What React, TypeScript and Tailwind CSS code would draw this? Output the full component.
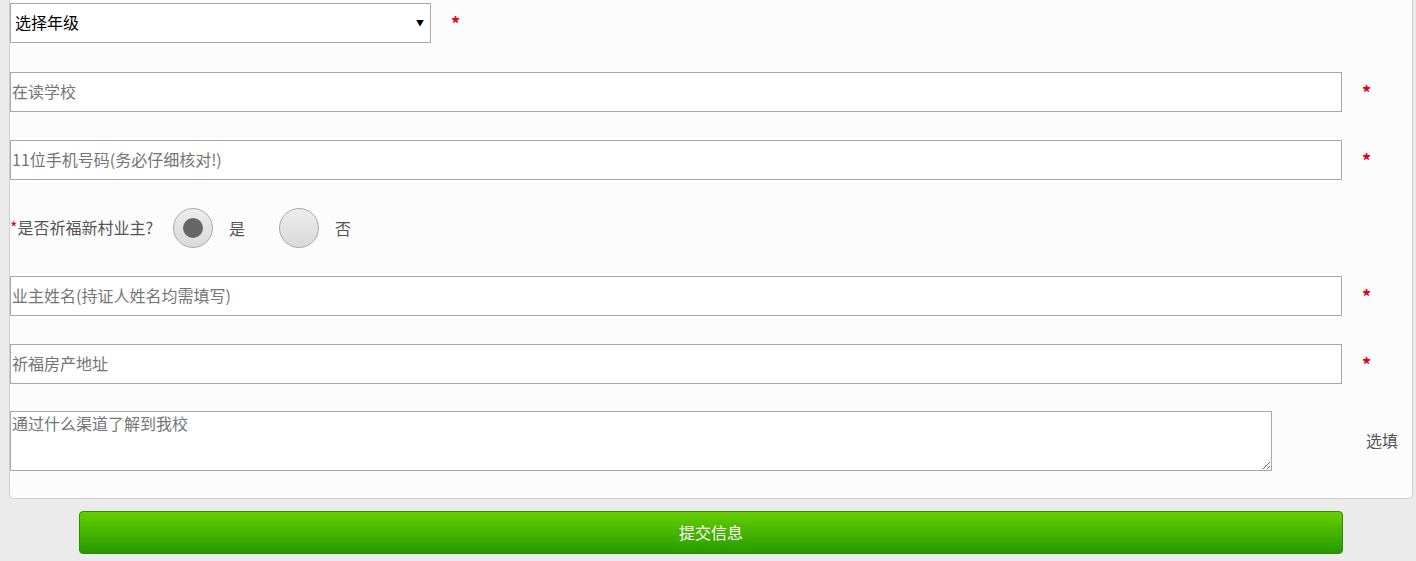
import React from 'react';

const font = { fontFamily: '"Noto Sans CJK SC", "Liberation Sans", sans-serif' };

const Star: React.FC<{ className?: string }> = ({ className = '' }) => (
    <span className={`text-[#e60012] text-[18px] font-bold leading-none ${className}`}>*</span>
);

const TextRow: React.FC<{ placeholder: string; className?: string }> = ({ placeholder, className = '' }) => (
    <div className={`flex items-center ${className}`}>
        <input
            type="text"
            placeholder={placeholder}
            className="w-[1332px] h-[40px] bg-white border border-[#a9a9a9] px-[1px] pb-[2px] text-[16px] text-[#333] placeholder-[#757575] outline-none"
        />
        <Star className="ml-[20px]" />
    </div>
);

const Radio: React.FC<{ checked?: boolean; label: string }> = ({ checked, label }) => (
    <label className="flex items-center">
        <span className="w-[40px] h-[40px] rounded-full border border-[#aaaaaa] bg-gradient-to-b from-[#ededed] to-[#d9d9d9] flex items-center justify-center">
            {checked && <span className="w-[20px] h-[20px] rounded-full bg-[#666666]" />}
        </span>
        <span className="ml-[16px] text-[16px] text-[#555]">{label}</span>
    </label>
);

const App: React.FC = () => {
    return (
        <div className="w-[1416px] h-[561px] bg-[#ebebeb] overflow-hidden" style={font}>
            <div className="ml-[9px] w-[1404px] bg-[#fcfcfc] border border-t-0 border-[#d0d0d0] rounded-b-[5px] pt-[3px] pb-[27px]">
                <div className="flex items-center">
                    <div className="relative w-[421px] h-[40px] bg-white border border-[#a9a9a9]">
                        <select className="appearance-none w-full h-full bg-transparent pl-[4px] pb-[2px] text-[16px] text-black outline-none">
                            <option>选择年级</option>
                        </select>
                        <span className="absolute right-[6px] top-[15px] text-[8px] leading-none text-black pointer-events-none">▼</span>
                    </div>
                    <Star className="ml-[20px]" />
                </div>

                <TextRow placeholder="在读学校" className="mt-[29px]" />
                <TextRow placeholder="11位手机号码(务必仔细核对!)" className="mt-[28px]" />

                <div className="mt-[28px] h-[40px] flex items-center">
                    <span className="text-[16px] text-[#555] pb-[2px]">
                        <span className="text-[#e60012]">*</span>是否祈福新村业主?
                    </span>
                    <div className="ml-[20px] flex items-center gap-[34px]">
                        <Radio checked label="是" />
                        <Radio label="否" />
                    </div>
                </div>

                <TextRow placeholder="业主姓名(持证人姓名均需填写)" className="mt-[28px]" />
                <TextRow placeholder="祈福房产地址" className="mt-[28px]" />

                <div className="mt-[27px] flex items-center">
                    <textarea
                        placeholder="通过什么渠道了解到我校"
                        className="w-[1262px] h-[60px] bg-white border border-[#a9a9a9] px-[1px] py-0 text-[16px] leading-[22px] text-[#333] placeholder-[#757575] outline-none"
                    />
                    <span className="ml-[94px] text-[16px] text-[#555] pb-[2px]">选填</span>
                </div>
            </div>

            <button
                type="button"
                className="mt-[12px] ml-[79px] w-[1264px] h-[43px] rounded-[4px] border border-[#2e8a00] bg-gradient-to-b from-[#66d000] to-[#229a00] text-white text-[16px] pb-[2px]"
            >
                提交信息
            </button>
        </div>
    );
};

export default App;
